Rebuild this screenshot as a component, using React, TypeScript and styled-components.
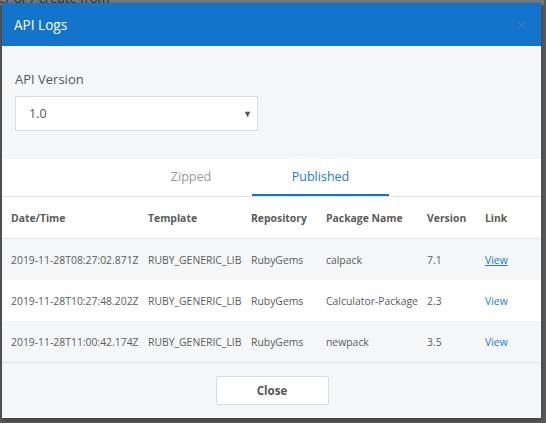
import React from "react"
import styled, { createGlobalStyle } from "styled-components"

const GlobalStyle = createGlobalStyle`
  html, body {
    margin: 0;
    padding: 0;
    background: #5b5b5b;
    font-family: "Open Sans", "Liberation Sans", sans-serif;
  }
`

const columns = [
  { title: "Date/Time", width: 137 },
  { title: "Template", width: 103 },
  { title: "Repository", width: 75 },
  { title: "Package Name", width: 101 },
  { title: "Version", width: 58 },
  { title: "Link", width: 65 },
]

const rows = [
  { date: "2019-11-28T08:27:02.871Z", template: "RUBY_GENERIC_LIB", repo: "RubyGems", pkg: "calpack", version: "7.1", visited: true },
  { date: "2019-11-28T10:27:48.202Z", template: "RUBY_GENERIC_LIB", repo: "RubyGems", pkg: "Calculator-Package", version: "2.3", visited: false },
  { date: "2019-11-28T11:00:42.174Z", template: "RUBY_GENERIC_LIB", repo: "RubyGems", pkg: "newpack", version: "3.5", visited: false },
]

const App = () => {
  return (
    <Page>
      <GlobalStyle />
      <Backdrop>er or / create from</Backdrop>
      <Modal>
        <Header>
          <Title>API Logs</Title>
          <CloseX>×</CloseX>
        </Header>
        <Body>
          <Label>API Version</Label>
          <Select>
            <span>1.0</span>
            <Caret>▼</Caret>
          </Select>
        </Body>
        <Panel>
          <Tabs>
            <Tab width={122}>Zipped</Tab>
            <Tab width={137} active>
              Published
            </Tab>
          </Tabs>
          <Table>
            <colgroup>
              {columns.map((c) => (
                <col key={c.title} style={{ width: c.width }} />
              ))}
            </colgroup>
            <thead>
              <tr>
                {columns.map((c) => (
                  <Th key={c.title}>{c.title}</Th>
                ))}
              </tr>
            </thead>
            <tbody>
              {rows.map((r, i) => (
                <Row key={r.date} striped={i % 2 === 0}>
                  <Td>{r.date}</Td>
                  <Td>{r.template}</Td>
                  <Td>{r.repo}</Td>
                  <Td>{r.pkg}</Td>
                  <Td>{r.version}</Td>
                  <Td>
                    <Link underline={r.visited}>View</Link>
                  </Td>
                </Row>
              ))}
            </tbody>
          </Table>
        </Panel>
        <Footer>
          <Button>Close</Button>
        </Footer>
      </Modal>
    </Page>
  )
}

const Page = styled.div`
  position: relative;
  width: 546px;
  height: 423px;
  overflow: hidden;
  background: #5b5b5b;
`

const Backdrop = styled.div`
  position: absolute;
  top: -9px;
  left: -2px;
  width: 546px;
  height: 14px;
  background: #7a7a7a;
  color: #2e2e2e;
  font-size: 13px;
  line-height: 14px;
`

const Modal = styled.div`
  position: absolute;
  top: 3px;
  left: 2px;
  width: 539px;
  height: 415px;
  background: #f5f6f8;
  box-shadow: 0 2px 6px rgba(0, 0, 0, 0.35);
  display: flex;
  flex-direction: column;
`

const Header = styled.div`
  height: 43px;
  background: #1374cb;
  display: flex;
  align-items: center;
  justify-content: space-between;
  padding: 0 15px 0 12px;
`

const Title = styled.div`
  color: #ffffff;
  font-size: 13.6px;
`

const CloseX = styled.div`
  color: #3f77b8;
  font-size: 17px;
  line-height: 1;
`

const Body = styled.div`
  padding: 24px 13px 28px;
`

const Label = styled.div`
  font-size: 13px;
  color: #555;
  line-height: 18px;
  margin-bottom: 8px;
`

const Select = styled.div`
  box-sizing: border-box;
  width: 243px;
  height: 35px;
  background: #fff;
  border: 1px solid #d8dde3;
  display: flex;
  align-items: center;
  justify-content: space-between;
  padding: 0 5px 0 13px;
  font-size: 12.5px;
  color: #555;
`

const Caret = styled.span`
  font-size: 9px;
  color: #555;
`

const Panel = styled.div`
  background: #fff;
`

const Tabs = styled.div`
  display: flex;
  padding-left: 128px;
  border-bottom: 1px solid #dfe2e6;
`

const Tab = styled.div<{ active?: boolean; width: number }>`
  width: ${(p) => p.width}px;
  height: 37px;
  box-sizing: border-box;
  display: flex;
  align-items: center;
  justify-content: center;
  font-size: 12.5px;
  color: ${(p) => (p.active ? "#1a7bd0" : "#999")};
  border-bottom: 2px solid ${(p) => (p.active ? "#1374cb" : "transparent")};
`

const Table = styled.table`
  width: 100%;
  table-layout: fixed;
  border-collapse: collapse;
  font-size: 10.4px;
  color: #5b5b5b;
  border-bottom: 1px solid #dfe2e6;
`

const Th = styled.th`
  text-align: left;
  font-weight: 700;
  height: 41px;
  padding: 0 0 0 9px;
  white-space: nowrap;
  overflow: hidden;
  border-bottom: 1px solid #dfe2e6;
`

const Row = styled.tr<{ striped: boolean }>`
  background: ${(p) => (p.striped ? "#f5f6f8" : "#fff")};
`

const Td = styled.td`
  height: 41px;
  padding: 0 0 0 9px;
  white-space: nowrap;
`

const Link = styled.span<{ underline: boolean }>`
  color: #1a7bd0;
  text-decoration: ${(p) => (p.underline ? "underline" : "none")};
`

const Footer = styled.div`
  flex: 1;
  display: flex;
  justify-content: center;
  align-items: center;
  padding-left: 1px;
`

const Button = styled.div`
  box-sizing: border-box;
  width: 113px;
  height: 29px;
  background: #fff;
  border: 1px solid #d8dde3;
  border-radius: 2px;
  display: flex;
  align-items: center;
  justify-content: center;
  font-size: 11.5px;
  font-weight: 700;
  color: #555;
`

export default App
